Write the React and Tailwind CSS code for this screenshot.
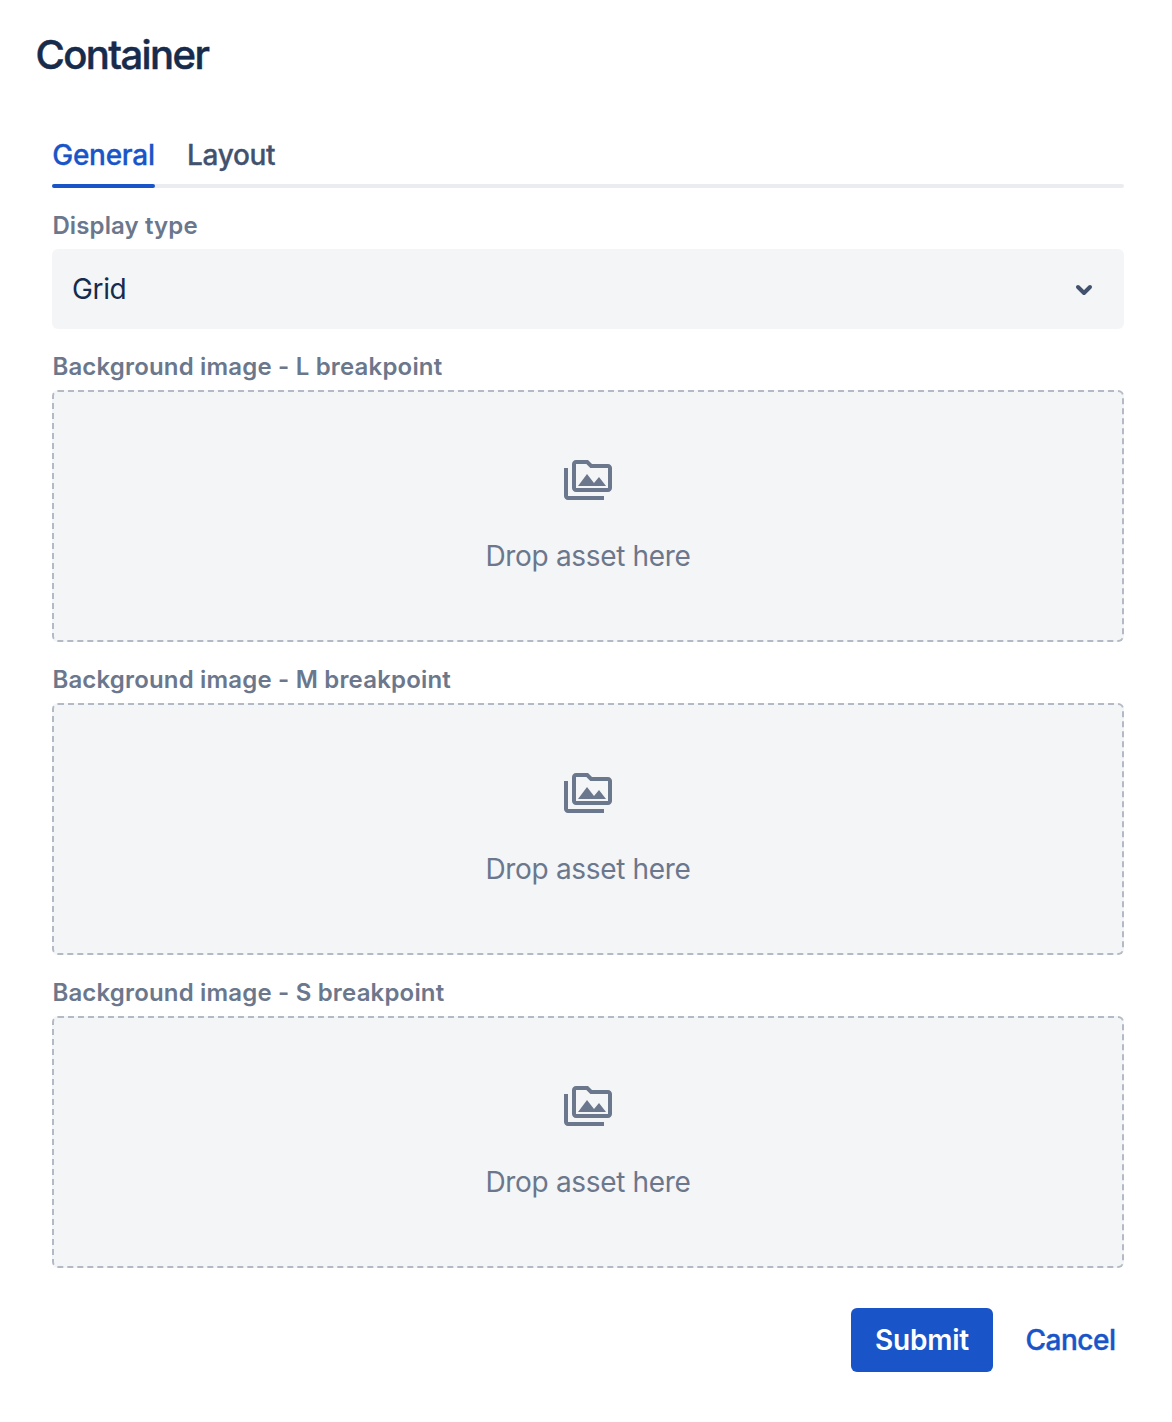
import React from "react";

function AssetIcon() {
  return (
    <svg className="block size-12" viewBox="0 0 24 24" fill="currentColor">
      <path d="M2 6H0v14c0 1.1.9 2 2 2h18v-2H2V6zm20-2h-8l-2-2H6c-1.1 0-1.99.9-1.99 2L4 16c0 1.1.9 2 2 2h16c1.1 0 2-.9 2-2V6c0-1.1-.9-2-2-2zm0 12H6V4h5.17l2 2H22v10z" />
      <path d="M7 15h14l-3.5-4.5-2.5 3L11.500 9z" />
    </svg>
  );
}

function DropZone({ size }) {
  return (
    <section className="mb-[21px]">
      <h2 className="mb-[7px] h-[33px] pl-[0.4px] text-[24px] leading-[33px] font-semibold tracking-[0.18px] text-[#6b778c]">
        Background image - {size} breakpoint
      </h2>
      <div className="flex h-[252px] flex-col items-center rounded-md border-2 border-dashed border-[#b3bac5] bg-[#f4f5f7] pt-16 text-[#6b778c]">
        <AssetIcon />
        <p className="mt-8 text-[28px] leading-[41px] tracking-[-0.33px]">Drop asset here</p>
      </div>
    </section>
  );
}

export default function App() {
  return (
    <main className="h-[1422px] w-[1172px] overflow-hidden bg-white font-['Inter',sans-serif] text-[#172b4d]">
      <h1 className="h-[128px] pt-[31px] pl-[35.500px] text-[40px] leading-12 font-medium tracking-[-1.6px] [-webkit-text-stroke:0.5px_currentColor]">Container</h1>
      <div className="ml-[52px] w-[1072px]">
        <div className="h-[60px]">
          <nav className="flex h-14 gap-8 text-[28px] leading-[54px] font-medium [-webkit-text-stroke:0.3px_currentColor]">
            <button className="h-14 w-[103px] pb-[2px] whitespace-nowrap tracking-[-0.25px] text-[#1955c8]">General</button>
            <button className="h-14 pb-[2px] tracking-[-0.3px] text-[#42526e]">Layout</button>
          </nav>
          <div className="h-1 rounded-full bg-[#ebecf0]">
            <div className="h-1 w-[103px] rounded-full bg-[#1955c8]" />
          </div>
        </div>
        <h2 className="mt-[21px] mb-[7px] h-[33px] pl-[0.4px] text-[24px] leading-[33px] font-semibold tracking-[0.12px] text-[#6b778c]">Display type</h2>
        <button className="mb-[21px] flex h-20 w-full items-center justify-between rounded-md bg-[#f4f5f7] px-5 text-[28px] tracking-[-0.35px]">
          Grid
          <svg className="size-10" viewBox="0 0 40 40" fill="none" stroke="#42526e" strokeWidth="4" strokeLinecap="round" strokeLinejoin="round">
            <path d="m14 18 6 6 6-6" />
          </svg>
        </button>
        <DropZone size="L" />
        <DropZone size="M" />
        <DropZone size="S" />
        <footer className="mt-10 flex justify-end text-[28px]">
          <button className="h-16 w-[142px] rounded-md bg-[#1955c8] font-semibold tracking-[-0.25px] text-white">Submit</button>
          <button className="mr-2 ml-8 h-16 w-[91px] font-medium whitespace-nowrap tracking-[-0.45px] text-[#1955c8] [-webkit-text-stroke:0.4px_currentColor]">Cancel</button>
        </footer>
      </div>
    </main>
  );
}
